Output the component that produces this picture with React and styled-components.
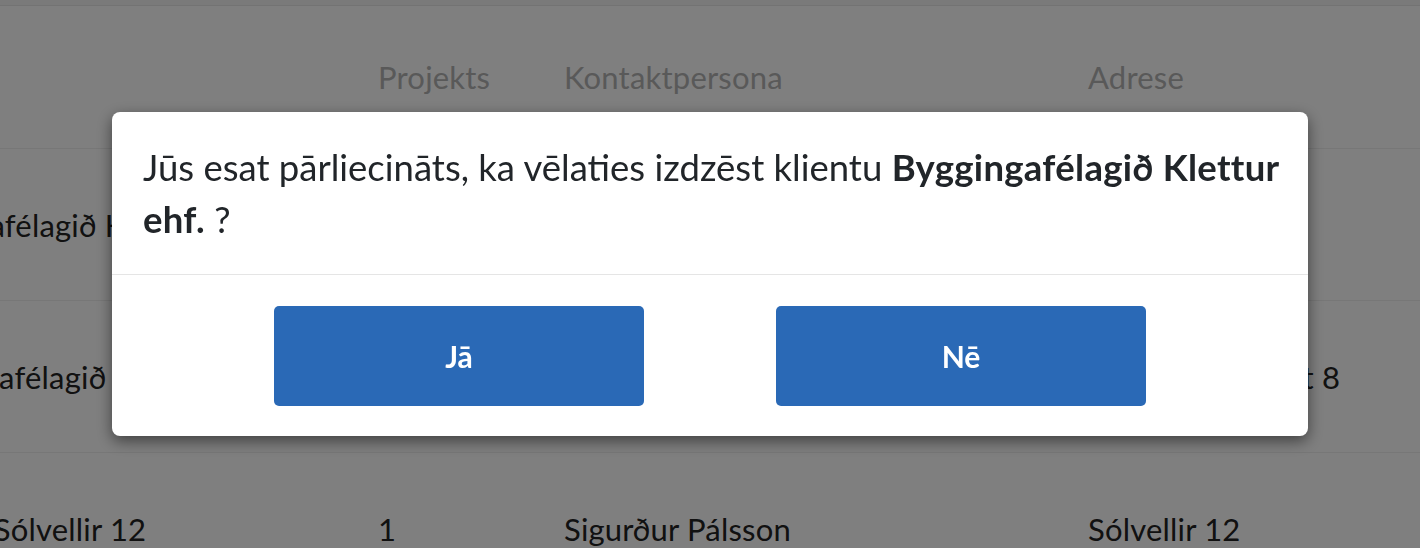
import React from "react"
import styled, { createGlobalStyle } from "styled-components"

const GlobalStyle = createGlobalStyle`
  html, body {
    margin: 0;
    padding: 0;
    background: #ffffff;
    overflow: hidden;
  }
  body {
    font-family: Lato, "Liberation Sans", sans-serif;
    color: #222222;
  }
`

const Page = styled.div`
  width: 1420px;
  height: 548px;
  overflow: hidden;
  background: #ffffff;
`

const TopBar = styled.div`
  height: 5px;
  background: #f4f4f4;
  border-bottom: 1px solid #e6e6e6;
`

const Table = styled.div`
  margin-left: -150px;
  font-size: 31px;
  letter-spacing: 0.2px;
`

const Row = styled.div`
  display: grid;
  grid-template-columns: 440px 186px 524px 1fr;
  align-items: center;
  height: ${(p) => (p.$head ? "142px" : "151px")};
  border-bottom: 1px solid #eeeeee;
  color: ${(p) => (p.$head ? "#b2b2b2" : "#222222")};
`

const NameCell = styled.div`
  text-align: center;
  white-space: nowrap;
`

const Cell = styled.div`
  padding-left: 88px;
  white-space: nowrap;
`

const Overlay = styled.div`
  position: fixed;
  inset: 0;
  background: rgba(0, 0, 0, 0.5);
  display: flex;
  align-items: center;
  justify-content: center;
`

const Modal = styled.div`
  width: 1196px;
  background: #ffffff;
  border-radius: 8px;
  box-shadow: 0 5px 15px rgba(0, 0, 0, 0.5);
  overflow: hidden;
`

const Body = styled.p`
  margin: 0;
  padding: 29px 14px 29px 31px;
  font-size: 36.5px;
  line-height: 52px;
  color: #212529;
  border-bottom: 1px solid #e5e5e5;

  b {
    font-weight: 700;
    letter-spacing: 0.3px;
  }
`

const Footer = styled.div`
  display: flex;
  justify-content: center;
  gap: 132px;
  padding: 31px 0 30px;
`

const Button = styled.button`
  width: 370px;
  height: 100px;
  border: none;
  border-radius: 5px;
  background: #2a69b6;
  color: #ffffff;
  font-family: Lato, "Liberation Sans", sans-serif;
  font-size: 30px;
  font-weight: 700;
  cursor: pointer;
`

const rows = [
  { name: "Byggingafélagið Klettur ehf.", projects: "2", contact: "Jón Guðmundsson", address: "Hraunbær 4" },
  { name: "Byggingafélagið Höfði ehf.", projects: "3", contact: "Anna Jónsdóttir", address: "Suðurlandsbraut 8" },
  { name: "Sólvellir 12", projects: "1", contact: "Sigurður Pálsson", address: "Sólvellir 12" },
]

const App = () => {
  return (
    <Page>
      <GlobalStyle />
      <TopBar />
      <Table>
        <Row $head>
          <NameCell />
          <Cell>Projekts</Cell>
          <Cell>Kontaktpersona</Cell>
          <Cell>Adrese</Cell>
        </Row>
        {rows.map((r) => (
          <Row key={r.name}>
            <NameCell>{r.name}</NameCell>
            <Cell>{r.projects}</Cell>
            <Cell>{r.contact}</Cell>
            <Cell>{r.address}</Cell>
          </Row>
        ))}
      </Table>

      <Overlay>
        <Modal>
          <Body>
            Jūs esat pārliecināts, ka vēlaties izdzēst klientu{" "}
            <b>Byggingafélagið Klettur ehf.</b> ?
          </Body>
          <Footer>
            <Button>Jā</Button>
            <Button>Nē</Button>
          </Footer>
        </Modal>
      </Overlay>
    </Page>
  )
}

export default App
